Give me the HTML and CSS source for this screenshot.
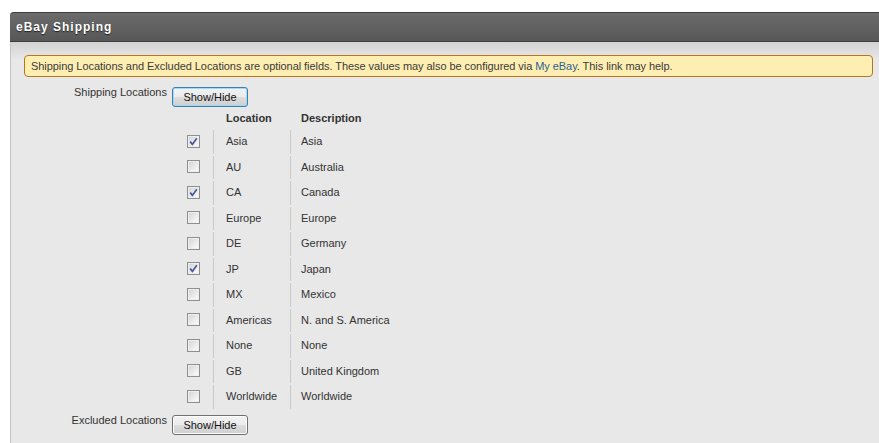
FILE: index.html
```html
<!DOCTYPE html>
<html>

<head>
  <meta charset="utf-8">
  <title>eBay Shipping</title>
  <link rel="stylesheet" href="styles.css">
</head>

<body>
  <div class="panel">
    <div class="panel-head">eBay Shipping</div>
    <div class="panel-body">
      <div class="notice">
        <span>Shipping Locations and Excluded Locations are optional fields. These values may also be configured via <a href="#">My eBay</a>. This link may help.</span>
      </div>

      <div class="field">
        <label class="field-label">Shipping Locations</label>
        <div class="field-value">
          <button class="btn is-focus">Show/Hide</button>
          <div class="loc-grid">
            <div class="cell head"></div>
            <div class="cell head col">Location</div>
            <div class="cell head col">Description</div>

            <div class="cell box"><span class="check on"><svg viewBox="0 0 11 11"><path d="M2.2 5.6 L4.4 8.4 L8.8 2.2"/></svg></span></div>
            <div class="cell col">Asia</div>
            <div class="cell col">Asia</div>

            <div class="cell box"><span class="check"></span></div>
            <div class="cell col">AU</div>
            <div class="cell col">Australia</div>

            <div class="cell box"><span class="check on"><svg viewBox="0 0 11 11"><path d="M2.2 5.6 L4.4 8.4 L8.8 2.2"/></svg></span></div>
            <div class="cell col">CA</div>
            <div class="cell col">Canada</div>

            <div class="cell box"><span class="check"></span></div>
            <div class="cell col">Europe</div>
            <div class="cell col">Europe</div>

            <div class="cell box"><span class="check"></span></div>
            <div class="cell col">DE</div>
            <div class="cell col">Germany</div>

            <div class="cell box"><span class="check on"><svg viewBox="0 0 11 11"><path d="M2.2 5.6 L4.4 8.4 L8.8 2.2"/></svg></span></div>
            <div class="cell col">JP</div>
            <div class="cell col">Japan</div>

            <div class="cell box"><span class="check"></span></div>
            <div class="cell col">MX</div>
            <div class="cell col">Mexico</div>

            <div class="cell box"><span class="check"></span></div>
            <div class="cell col">Americas</div>
            <div class="cell col">N. and S. America</div>

            <div class="cell box"><span class="check"></span></div>
            <div class="cell col">None</div>
            <div class="cell col">None</div>

            <div class="cell box"><span class="check"></span></div>
            <div class="cell col">GB</div>
            <div class="cell col">United Kingdom</div>

            <div class="cell box"><span class="check"></span></div>
            <div class="cell col">Worldwide</div>
            <div class="cell col">Worldwide</div>
          </div>
        </div>
      </div>

      <div class="field field-last">
        <label class="field-label">Excluded Locations</label>
        <div class="field-value">
          <button class="btn">Show/Hide</button>
        </div>
      </div>
    </div>
  </div>
</body>
</html>
```

FILE: styles.css
```css
/* Boiler Plate */
* {
  box-sizing: border-box;
}
html {
  overflow: hidden;
}
body {
  margin: 0;
  background: #ffffff;
  font-family: "Liberation Sans", Arial, sans-serif;
  font-size: 11px;
  color: #333333;
}

/* Panel */
.panel {
  margin: 12px 0 0 10px;
  width: 880px;
  height: 440px;
  border-left: 1px solid #c4c4c4;
  border-top-left-radius: 4px;
  background: #e8e8e8;
}
.panel-head {
  height: 30px;
  padding-left: 6px;
  display: flex;
  align-items: center;
  border-top: 1px solid #3c3c3c;
  border-bottom: 1px solid #3e3e3e;
  border-top-left-radius: 4px;
  margin-left: -1px;
  background: linear-gradient(#6b6b6b, #575757);
  color: #ffffff;
  font-size: 12px;
  font-weight: bold;
  letter-spacing: 1px;
  text-shadow: 0 1px 1px #222222;
}
.panel-body {
  padding: 13px 13px 0 13px;
  background: linear-gradient(#d3d3d3 0px, #e8e8e8 18px);
}

/* Notice */
.notice {
  width: 849px;
  height: 22px;
  padding-left: 6px;
  display: flex;
  align-items: center;
  background: #feeeb1;
  border: 1px solid #b5771e;
  border-radius: 4px;
  color: #3b3b3b;
  letter-spacing: -0.06px;
}
.notice a {
  color: #2e5e8f;
  text-decoration: none;
}

/* Fields */
.field {
  display: flex;
  margin-top: 9px;
}
.field-last {
  margin-top: 5px;
}
.field-label {
  width: 143px;
  text-align: right;
  line-height: 13px;
  color: #333333;
}
.field-value {
  margin-left: 5px;
  padding-top: 1px;
}

/* Button */
.btn {
  display: block;
  width: 76px;
  height: 20px;
  padding: 0;
  font-family: inherit;
  font-size: 11px;
  color: #111111;
  border: 1px solid #707070;
  border-radius: 3px;
  background: linear-gradient(#f2f2f2 0%, #ebebeb 50%, #dddddd 51%, #cfcfcf 100%);
  box-shadow: inset 0 0 0 1px #fcfcfc;
}
.btn.is-focus {
  border-color: #3c7fb1;
  box-shadow: inset 0 0 0 1px #9fd9f6;
}

/* Location grid */
.loc-grid {
  display: grid;
  grid-template-columns: 41px 77px 160px;
  grid-template-rows: 21px;
  grid-auto-rows: 23.5px;
  row-gap: 2px;
}
.cell {
  display: flex;
  align-items: center;
  padding-bottom: 1px;
}
.cell.box {
  justify-content: center;
  padding-left: 1px;
}
.cell.col {
  padding-left: 12px;
  border-left: 1px solid #c9c9c9;
}
.cell.head {
  font-weight: bold;
  border-left-color: transparent;
  padding-bottom: 0;
}
.cell.head.col:last-child {
  padding-left: 11px;
}
.cell.col:nth-child(3n) {
  padding-left: 10px;
}

/* Checkbox */
.check {
  width: 13px;
  height: 13px;
  border: 1px solid #8f8f8f;
  background: linear-gradient(135deg, #d2d2d2, #f6f6f6 80%);
  box-shadow: inset 0 0 0 1px #eeeeee;
  display: flex;
  align-items: center;
  justify-content: center;
}
.check svg {
  width: 11px;
  height: 11px;
}
.check path {
  fill: none;
  stroke: #4456a0;
  stroke-width: 1.7;
}
```
